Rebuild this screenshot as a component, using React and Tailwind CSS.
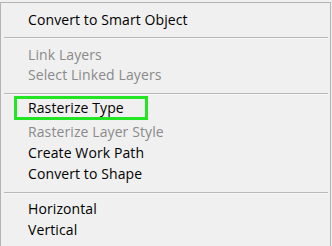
// Context menu (type layer)
const Separator = () => (
  <div className="h-[2px] ml-[3px] mr-[2px] border-t border-[#b9b9b9] bg-[#f7f7f7]" />
);

const Item = ({ label, disabled, className = '' }) => (
  <div
    className={`flex items-center h-[20px] pl-[27px] ${disabled ? 'text-[#8a8a8a]' : 'text-[#000000]'} ${className}`}
  >
    {label}
  </div>
);

export default function App() {
  return (
    <div className="w-[332px] h-[246px] bg-[#f0f0f0] overflow-hidden">
      <div
        className="mt-[2px] w-[331px] h-[244px] border-t border-l border-r border-[#b4b4b4] text-[14px] leading-[20px] tracking-[0.1px]"
        style={{ fontFamily: '"Open Sans", "Noto Sans", sans-serif' }}
      >
        <div className="flex items-center h-[34px] pl-[27px] text-black">Convert to Smart Object</div>
        <Separator />
        <div className="pt-[6px] pb-[8px]">
          <Item label="Link Layers" disabled />
          <Item label="Select Linked Layers" disabled />
        </div>
        <Separator />
        <div className="pt-[1px]">
          <div className="ml-[13px] w-[134px] h-[24px] border-[3px] border-[#22e624] flex items-center pl-[11px] text-black">
            Rasterize Type
          </div>
          <Item label="Rasterize Layer Style" disabled className="mt-[2px]" />
          <Item label="Create Work Path" className="h-[21px]" />
          <Item label="Convert to Shape" className="h-[21px]" />
        </div>
        <div className="h-[8px]" />
        <Separator />
        <div className="pt-[5px]">
          <Item label="Horizontal" />
          <Item label="Vertical" className="mt-[1px]" />
        </div>
      </div>
    </div>
  );
}
